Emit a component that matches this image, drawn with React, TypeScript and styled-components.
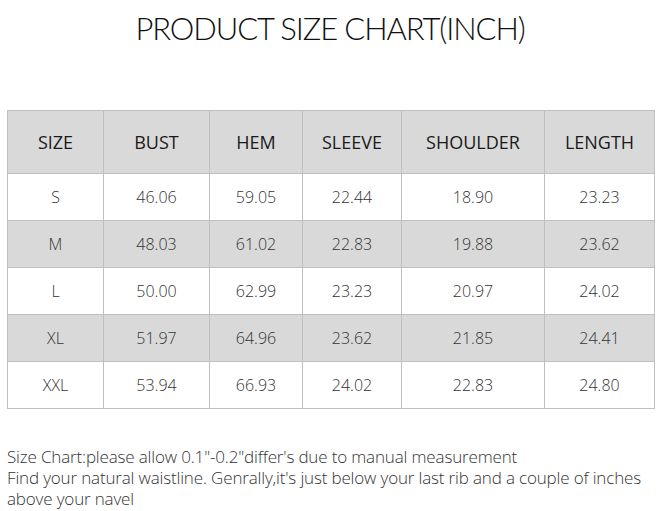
import styled, { createGlobalStyle } from "styled-components";

const GlobalStyle = createGlobalStyle`
  html, body {
    margin: 0;
    padding: 0;
    background: #ffffff;
  }
`;

const Page = styled.div`
  width: 660px;
  height: 511px;
  overflow: hidden;
  padding: 0 7px;
  box-sizing: border-box;
  font-family: "Open Sans", "Noto Sans", sans-serif;
`;

const Title = styled.h1`
  margin: 0;
  padding-top: 8px;
  height: 110px;
  box-sizing: border-box;
  text-align: center;
  font-family: Lato, "Liberation Sans", sans-serif;
  font-weight: 300;
  font-size: 31px;
  line-height: 40px;
  color: #111;
  letter-spacing: -1.1px;
`;

const Table = styled.table`
  width: 647px;
  border-collapse: collapse;
  table-layout: fixed;
`;

const Row = styled.tr<{ $shaded?: boolean }>`
  background: ${(p) => (p.$shaded ? "#d9d9d9" : "#ffffff")};
`;

const HeadCell = styled.th`
  height: 62px;
  border: 1px solid #bfbfbf;
  font-weight: 400;
  font-size: 18px;
  color: #1a1a1a;
  text-align: center;
  padding: 0;
`;

const Cell = styled.td`
  height: 46px;
  border: 1px solid #bfbfbf;
  font-weight: 300;
  font-size: 16px;
  color: #333;
  text-align: center;
  padding: 0;
`;

const Notes = styled.div`
  margin-top: 37px;
  font-size: 17px;
  line-height: 21px;
  color: #333;
  font-weight: 300;
  letter-spacing: -0.16px;
`;

const Line = styled.p`
  margin: 0;
`;

const columns = [
  { label: "SIZE", width: 96 },
  { label: "BUST", width: 106 },
  { label: "HEM", width: 93 },
  { label: "SLEEVE", width: 99 },
  { label: "SHOULDER", width: 143 },
  { label: "LENGTH", width: 110 },
];

const rows = [
  ["S", "46.06", "59.05", "22.44", "18.90", "23.23"],
  ["M", "48.03", "61.02", "22.83", "19.88", "23.62"],
  ["L", "50.00", "62.99", "23.23", "20.97", "24.02"],
  ["XL", "51.97", "64.96", "23.62", "21.85", "24.41"],
  ["XXL", "53.94", "66.93", "24.02", "22.83", "24.80"],
];

export default function App() {
  return (
    <>
      <GlobalStyle />
      <Page>
        <Title>PRODUCT SIZE CHART(INCH)</Title>
        <Table>
          <colgroup>
            {columns.map((c) => (
              <col key={c.label} style={{ width: c.width }} />
            ))}
          </colgroup>
          <thead>
            <Row $shaded>
              {columns.map((c) => (
                <HeadCell key={c.label}>{c.label}</HeadCell>
              ))}
            </Row>
          </thead>
          <tbody>
            {rows.map((r, i) => (
              <Row key={r[0]} $shaded={i % 2 === 1}>
                {r.map((v, j) => (
                  <Cell key={j}>{v}</Cell>
                ))}
              </Row>
            ))}
          </tbody>
        </Table>
        <Notes>
          <Line>Size Chart:please allow 0.1"-0.2"differ's due to manual measurement</Line>
          <Line>
            Find your natural waistline. Genrally,it's just below your last rib and a couple of inches above your navel
          </Line>
        </Notes>
      </Page>
    </>
  );
}
